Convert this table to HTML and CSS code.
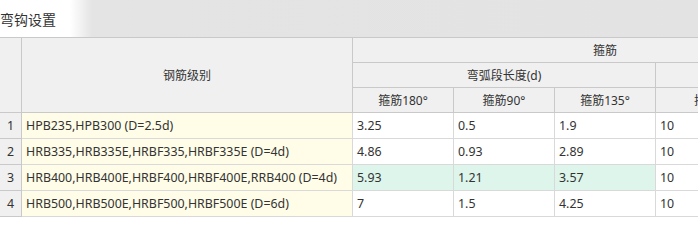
FILE: index.html
```html
<!DOCTYPE html>
<html lang="zh-CN">
<head>
<meta charset="utf-8">
<title>弯钩设置</title>
<link rel="stylesheet" href="styles.css">
</head>
<body>
<div class="topbar"><span class="tab">弯钩设置</span></div>
<div class="grid">
  <div class="c hd rn r3"></div>
  <div class="c hd name r3">钢筋级别</div>
  <div class="c hd span5">箍筋</div>
  <div class="c hd span3">弯弧段长度(d)</div>
  <div class="c hd span2"></div>
  <div class="c hd">箍筋180°</div>
  <div class="c hd">箍筋90°</div>
  <div class="c hd">箍筋135°</div>
  <div class="c hd">拉筋</div>
  <div class="c hd"></div>

  <div class="c rn">1</div>
  <div class="c nm">HPB235,HPB300 (D=2.5d)</div>
  <div class="c">3.25</div><div class="c">0.5</div><div class="c">1.9</div><div class="c">10</div><div class="c"></div>

  <div class="c rn">2</div>
  <div class="c nm">HRB335,HRB335E,HRBF335,HRBF335E (D=4d)</div>
  <div class="c">4.86</div><div class="c">0.93</div><div class="c">2.89</div><div class="c">10</div><div class="c"></div>

  <div class="c rn">3</div>
  <div class="c nm">HRB400,HRB400E,HRBF400,HRBF400E,RRB400 (D=4d)</div>
  <div class="c sel">5.93</div><div class="c sel">1.21</div><div class="c sel">3.57</div><div class="c">10</div><div class="c"></div>

  <div class="c rn">4</div>
  <div class="c nm">HRB500,HRB500E,HRBF500,HRBF500E (D=6d)</div>
  <div class="c">7</div><div class="c">1.5</div><div class="c">4.25</div><div class="c">10</div><div class="c"></div>
</div>
</body>
</html>
```
FILE: styles.css
```css
html, body {
  margin: 0;
  padding: 0;
  background: #fff;
  overflow: hidden;
  font-family: "Noto Sans", "Noto Sans CJK SC", sans-serif;
  color: #333;
}
.topbar {
  height: 37px;
  border-bottom: 1px solid #c9c9c9;
  background: linear-gradient(to right, #fff 0, #fff 70px, #e4e4e4 92px, #e3e3e3 100%);
  display: flex;
  align-items: center;
}
.tab {
  font-size: 14px;
  font-family: "Noto Sans CJK SC", sans-serif;
  color: #333;
  line-height: 1;
}
.grid {
  display: grid;
  grid-template-columns: 22px 331px 101px 101px 101px 101px 101px;
  grid-template-rows: 25px 25px 25px 26px 26px 26px 26px;
  width: 858px;
  font-size: 12.4px;
}
.c {
  box-sizing: border-box;
  border-right: 1px solid #d9d9d9;
  border-bottom: 1px solid #d9d9d9;
  padding: 0 4px;
  display: flex;
  align-items: center;
  white-space: nowrap;
  overflow: hidden;
}
.hd {
  background: #f0f0f0;
  border-color: #c9c9c9;
  justify-content: center;
  font-size: 12px;
}
.r3 { grid-row: span 3; }
.span5 { grid-column: span 5; }
.span3 { grid-column: span 3; }
.span2 { grid-column: span 2; }
.rn {
  background: #f0f0f0;
  border-color: #c9c9c9;
  justify-content: center;
  padding: 0;
}
.nm { background: #fffde8; }
.sel { background: #ddf5ea; }
```
